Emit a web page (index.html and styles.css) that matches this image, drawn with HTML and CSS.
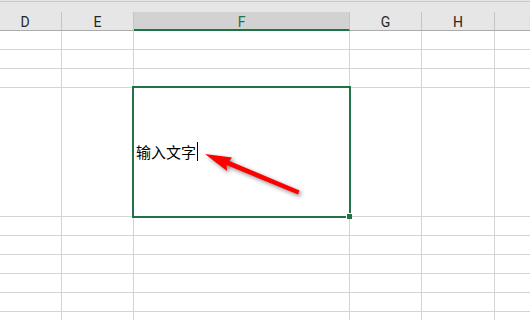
FILE: index.html
```html
<!DOCTYPE html>
<html lang="zh">
<head>
<meta charset="utf-8">
<title>Sheet</title>
<link rel="stylesheet" href="styles.css">
</head>
<body>
<div class="sheet">
  <div class="topband"></div>
  <div class="row head">
    <div class="hc">D</div>
    <div class="hc">E</div>
    <div class="hc sel">F</div>
    <div class="hc">G</div>
    <div class="hc">H</div>
    <div class="hc">I</div>
  </div>
  <div class="row"><div class="c"></div><div class="c"></div><div class="c"></div><div class="c"></div><div class="c"></div><div class="c"></div></div>
  <div class="row"><div class="c"></div><div class="c"></div><div class="c"></div><div class="c"></div><div class="c"></div><div class="c"></div></div>
  <div class="row"><div class="c"></div><div class="c"></div><div class="c"></div><div class="c"></div><div class="c"></div><div class="c"></div></div>
  <div class="row tall"><div class="c"></div><div class="c"></div><div class="c edit"><span class="txt">输入文字</span><span class="caret"></span></div><div class="c"></div><div class="c"></div><div class="c"></div></div>
  <div class="row"><div class="c"></div><div class="c"></div><div class="c"></div><div class="c"></div><div class="c"></div><div class="c"></div></div>
  <div class="row"><div class="c"></div><div class="c"></div><div class="c"></div><div class="c"></div><div class="c"></div><div class="c"></div></div>
  <div class="row"><div class="c"></div><div class="c"></div><div class="c"></div><div class="c"></div><div class="c"></div><div class="c"></div></div>
  <div class="row"><div class="c"></div><div class="c"></div><div class="c"></div><div class="c"></div><div class="c"></div><div class="c"></div></div>
  <div class="row"><div class="c"></div><div class="c"></div><div class="c"></div><div class="c"></div><div class="c"></div><div class="c"></div></div>
  <div class="row"><div class="c"></div><div class="c"></div><div class="c"></div><div class="c"></div><div class="c"></div><div class="c"></div></div>

  <div class="selection"></div>
  <div class="handle"></div>
  <svg class="arrow" width="530" height="320" viewBox="0 0 530 320">
    <polygon points="205,154 232,157.5 229.5,161 299.5,190.5 298,194.5 226.5,165 227,171" fill="#ff0000"/>
  </svg>
</div>
</body>
</html>
```

FILE: styles.css
```css
html, body {
  margin: 0;
  padding: 0;
  background: #ffffff;
  overflow: hidden;
}

.sheet {
  position: relative;
  width: 530px;
  height: 320px;
  overflow: hidden;
}

.topband {
  height: 12px;
  box-sizing: border-box;
  background: #e6e6e6;
  padding-top: 1px;
}
.topband::before {
  content: "";
  display: block;
  height: 1px;
  background: #c8c8c8;
}

.row {
  display: grid;
  grid-template-columns: 73px 72px 216px 72px 73px 73px;
  margin-left: -11px;
  height: 19px;
}

.row.tall {
  height: 129px;
}

.c {
  box-sizing: border-box;
  border-right: 1px solid #d4d4d4;
  border-bottom: 1px solid #d4d4d4;
}

.head {
  background: #e6e6e6;
}

.hc {
  box-sizing: border-box;
  height: 19px;
  border-right: 1px solid #c4c4c4;
  border-bottom: 1px solid #ababab;
  text-align: center;
  font-family: Roboto, "Liberation Sans", sans-serif;
  font-size: 14px;
  line-height: 18px;
  padding-top: 1px;
  color: #262626;
}

.hc.sel {
  background: #d2d2d2;
  color: #217346;
  border-bottom: 2px solid #217346;
}

.edit {
  display: flex;
  align-items: center;
  padding-left: 2px;
  padding-bottom: 1px;
}

.txt {
  font-family: "Noto Sans CJK SC", sans-serif;
  font-size: 15px;
  line-height: 19px;
  color: #000000;
}

.caret {
  display: inline-block;
  width: 1px;
  height: 19px;
  margin-left: 1px;
  background: #000000;
}

.selection {
  position: absolute;
  left: 132px;
  top: 86px;
  width: 219px;
  height: 132px;
  box-sizing: border-box;
  border: 2px solid #217346;
}

.handle {
  position: absolute;
  left: 346px;
  top: 213px;
  width: 5px;
  height: 5px;
  background: #217346;
  border-top: 1px solid #ffffff;
  border-left: 1px solid #ffffff;
}

.arrow {
  position: absolute;
  left: 0;
  top: 0;
  filter: drop-shadow(2px 2px 2px rgba(0, 0, 0, 0.45));
}
```
